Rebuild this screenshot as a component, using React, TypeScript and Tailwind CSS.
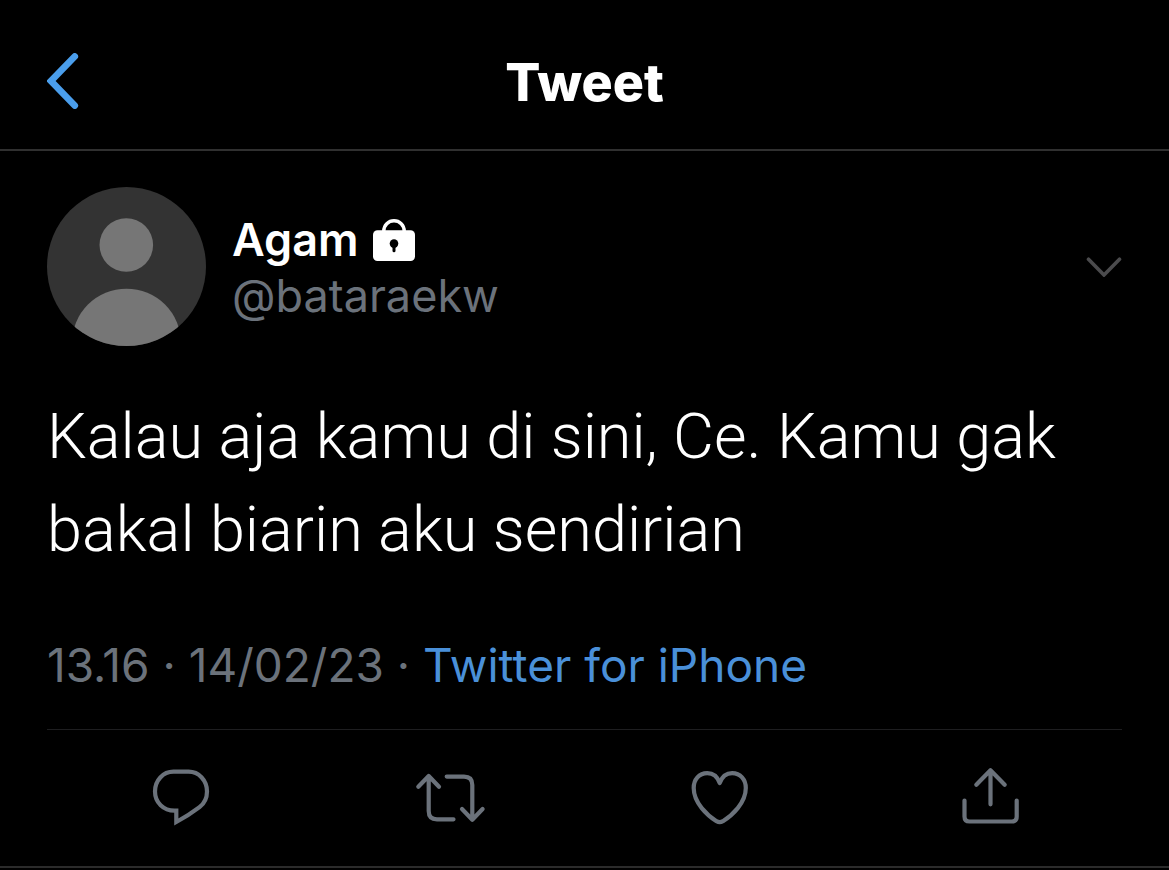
import type { ReactNode } from 'react'

const TWEET = {
  name: 'Agam',
  handle: '@bataraekw',
  text: 'Kalau aja kamu di sini, Ce. Kamu gak bakal biarin aku sendirian',
  time: '13.16',
  date: '14/02/23',
  source: 'Twitter for iPhone',
}

function BackIcon() {
  return (
    <svg className="h-14 w-8" viewBox="0 0 32 56" fill="none" stroke="currentColor" strokeWidth="6.8" strokeLinecap="round" aria-hidden="true">
      <path d="M27.7 3.5 4 28l23.7 24.5" />
    </svg>
  )
}

function LockIcon() {
  return (
    <svg className="h-[42px] w-[42px]" viewBox="0 0 42 42" role="img" aria-label="Protected account">
      <path d="M10.8 14v-2a10.2 10.2 0 0 1 20.4 0v2" fill="none" stroke="#fff" strokeWidth="3.4" />
      <rect y="11.3" width="42" height="30.7" rx="4.5" fill="#fff" />
      <circle cx="21" cy="24.6" r="4.3" fill="#000" />
      <path d="M21 26v5.7" stroke="#000" strokeWidth="3" strokeLinecap="round" />
    </svg>
  )
}

function Avatar() {
  return (
    <div className="size-[159px] shrink-0 overflow-hidden rounded-full bg-[#333333]">
      <svg className="size-full" viewBox="0 0 159 159" fill="#767676" aria-hidden="true">
        <circle cx="79.3" cy="58" r="26.8" />
        <ellipse cx="79.5" cy="156" rx="54.5" ry="54.3" />
      </svg>
    </div>
  )
}

function ActionIcon({ children }: { children: ReactNode }) {
  return (
    <svg
      className="size-[72px]"
      viewBox="0 0 72 72"
      fill="none"
      stroke="currentColor"
      strokeWidth="4.2"
      strokeLinecap="round"
      strokeLinejoin="round"
      aria-hidden="true"
    >
      {children}
    </svg>
  )
}

const ACTIONS = [
  {
    label: 'Reply',
    icon: (
      <path
        strokeLinejoin="miter"
        d="M28.5 10.7H43.5C54 10.7 62 19.5 62 30.5C62 37 59.3 42.5 54.5 46.2C47.5 51.5 39 57 31.3 61V49.7H29.5C18.5 49.7 10 41.5 10 30.5C10 19.5 18 10.7 28.5 10.7Z"
      />
    ),
  },
  {
    label: 'Retweet',
    icon: (
      <>
        <path d="M4.3 25.7 14.7 15l10.3 10.7M14.7 15.5V50q0 8.3 8.3 8.3H39.5" />
        <path d="M32.7 15.6H50q8.3 0 8.3 8.3V58.5M48 48l10.3 10.7L68.6 48" />
      </>
    ),
  },
  {
    label: 'Like',
    icon: (
      <path d="M36.7 22C34.5 16 30 12.2 24.3 12.2C16 12.2 10.7 18.5 10.7 27C10.7 42 24.5 54.5 33.5 60.2Q36.7 62 39.9 60.2C49 54.5 62.8 42 62.8 27C62.8 18.5 57.4 12.2 49.1 12.2C43.4 12.2 39 16 36.7 22Z" />
    ),
  },
  {
    label: 'Share',
    icon: (
      <>
        <path d="M24.3 23.7 38.5 9.2l14.2 14.5M38.5 10V43.3" />
        <path d="M12.5 39.5V55.5q0 5 5 5H59.7q5 0 5-5V39.5" />
      </>
    ),
  },
]

export default function App() {
  return (
    <div className="min-h-screen bg-black font-['Inter',sans-serif] text-white">
      <header className="grid h-[151px] grid-cols-[1fr_auto_1fr] items-center border-b-2 border-[#303030] px-[47px] pt-3">
        <button type="button" aria-label="Back" className="justify-self-start text-[#4a9eec]">
          <BackIcon />
        </button>
        <h1 className="pt-1 text-[52px] leading-[64px] font-extrabold">Tweet</h1>
      </header>

      <main>
        <article className="border-b-2 border-[#2b2b2b] px-[47px] pt-9">
          <div className="flex items-center">
            <Avatar />
            <div className="ml-[26px] min-w-0 flex-1 pt-0.5">
              <div className="flex items-center gap-3.5">
                <span className="text-[45px] leading-[56px] font-semibold">{TWEET.name}</span>
                <LockIcon />
              </div>
              <div className="text-[45px] leading-[56px] text-[#6b727b]">{TWEET.handle}</div>
            </div>
            <button type="button" aria-label="More options" className="text-[#4b4b4d]">
              <svg className="h-5 w-9" viewBox="0 0 36 20" fill="none" stroke="currentColor" strokeWidth="3.6" strokeLinecap="round" aria-hidden="true">
                <path d="M2.5 2.2 18 18 33.5 2.2" />
              </svg>
            </button>
          </div>

          <p className="mt-11 font-['Roboto',sans-serif] text-[63px] leading-[93px] font-light">{TWEET.text}</p>

          <div className="mt-[61px] border-b border-[#1e1e20] pb-9 text-[46px] leading-[56px] text-[#6b727b]">
            <time>
              {TWEET.time} · {TWEET.date}
            </time>
            {' · '}
            <a href="#source" className="text-[#4a90d9]">
              {TWEET.source}
            </a>
          </div>

          <div className="grid grid-cols-4 justify-items-center pt-[31px] pb-[33px] text-[#6b727b]">
            {ACTIONS.map((action) => (
              <button key={action.label} type="button" aria-label={action.label}>
                <ActionIcon>{action.icon}</ActionIcon>
              </button>
            ))}
          </div>
        </article>
      </main>
    </div>
  )
}
